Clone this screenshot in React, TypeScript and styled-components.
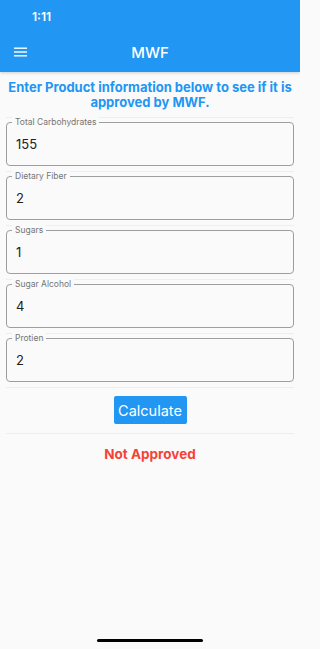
import React from "react";
import styled, { createGlobalStyle } from "styled-components";

const GlobalStyle = createGlobalStyle`
  html, body {
    margin: 0;
    padding: 0;
    background: #fafafa;
  }
  * {
    box-sizing: border-box;
  }
`;

const Screen = styled.div`
  width: 300px;
  height: 649px;
  background: #fafafa;
  font-family: Inter, Roboto, "Noto Sans", sans-serif;
  display: flex;
  flex-direction: column;
  position: relative;
  overflow: hidden;
`;

const Header = styled.header`
  background: #2196f3;
  height: 72px;
  box-shadow: 0 1px 3px rgba(0, 0, 0, 0.18);
  display: flex;
  flex-direction: column;
  color: #fff;
`;

const StatusBar = styled.div`
  height: 32px;
  padding: 9px 0 0 32px;
  font-size: 12px;
  font-weight: 600;
`;

const AppBar = styled.div`
  height: 40px;
  display: flex;
  align-items: center;
  padding: 0 0 0 14px;
`;

const Title = styled.h1`
  flex: 1;
  margin: 0 0 0 -27px;
  text-align: center;
  font-size: 15px;
  font-weight: 500;
`;

const Content = styled.main`
  padding: 0 6px;
  display: flex;
  flex-direction: column;
`;

const Intro = styled.p`
  margin: 0;
  padding: 8px 0 7px;
  text-align: center;
  color: #2196f3;
  font-size: 13px;
  line-height: 15px;
  font-weight: 700;
  border-bottom: 1px solid #eeeeee;
`;

const FieldRow = styled.div`
  padding: 4px 0 5px;
  border-bottom: 1px solid #eeeeee;
`;

const FieldBox = styled.div`
  position: relative;
  height: 44px;
  border: 1px solid #9e9e9e;
  border-radius: 4px;
  padding: 13px 0 0 9px;
  font-size: 13px;
  color: #212121;
`;

const Label = styled.span`
  position: absolute;
  top: -6px;
  left: 5px;
  padding: 0 3px;
  background: #fafafa;
  font-size: 8.5px;
  line-height: 11px;
  color: #757575;
`;

const ButtonRow = styled.div`
  display: flex;
  justify-content: center;
  padding: 8px 0 9px;
  border-bottom: 1px solid #eeeeee;
`;

const Button = styled.button`
  height: 28px;
  width: 73px;
  border: none;
  border-radius: 2px;
  background: #2196f3;
  color: #fff;
  font-family: inherit;
  font-size: 14.5px;
  padding: 0;
`;

const Result = styled.div`
  text-align: center;
  padding: 12px 0;
  color: #f44336;
  font-size: 13.5px;
  font-weight: 700;
`;

const HomeIndicator = styled.div`
  position: absolute;
  bottom: 7px;
  left: 97px;
  width: 106px;
  height: 3px;
  border-radius: 2px;
  background: #000;
`;

const MenuIcon = () => (
  <svg width="13" height="10" viewBox="0 0 13 10">
    <rect x="0" y="0.5" width="13" height="1.4" fill="#fff" />
    <rect x="0" y="4.3" width="13" height="1.4" fill="#fff" />
    <rect x="0" y="8.1" width="13" height="1.4" fill="#fff" />
  </svg>
);

const fields = [
  { label: "Total Carbohydrates", value: "155" },
  { label: "Dietary Fiber", value: "2" },
  { label: "Sugars", value: "1" },
  { label: "Sugar Alcohol", value: "4" },
  { label: "Protien", value: "2" },
];

export default function App() {
  return (
    <Screen>
      <GlobalStyle />
      <Header>
        <StatusBar>1:11</StatusBar>
        <AppBar>
          <MenuIcon />
          <Title>MWF</Title>
        </AppBar>
      </Header>
      <Content>
        <Intro>
          Enter Product information below to see if it is approved by MWF.
        </Intro>
        {fields.map((f) => (
          <FieldRow key={f.label}>
            <FieldBox>
              <Label>{f.label}</Label>
              {f.value}
            </FieldBox>
          </FieldRow>
        ))}
        <ButtonRow>
          <Button>Calculate</Button>
        </ButtonRow>
        <Result>Not Approved</Result>
      </Content>
      <HomeIndicator />
    </Screen>
  );
}
